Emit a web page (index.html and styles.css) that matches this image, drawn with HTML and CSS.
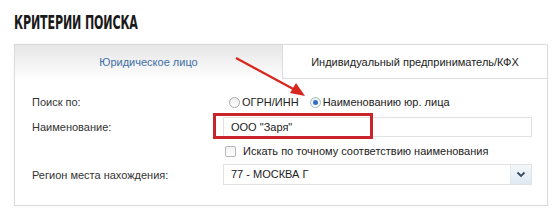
FILE: index.html
```html
<!DOCTYPE html>
<html lang="ru">
<head>
<meta charset="utf-8">
<link rel="stylesheet" href="styles.css">
</head>
<body>
<div class="page">
  <h1 class="title">КРИТЕРИИ ПОИСКА</h1>
  <div class="panel">
    <div class="tabs">
      <div class="tab tab-active">Юридическое лицо</div>
      <div class="tab tab-other">Индивидуальный предприниматель/КФХ</div>
    </div>
    <div class="body">
      <div class="row row1">
        <div class="label">Поиск по:</div>
        <div class="control radios">
          <span class="radio"></span><span class="rtext">ОГРН/ИНН</span>
          <span class="radio radio-on"></span><span class="rtext">Наименованию юр. лица</span>
        </div>
      </div>
      <div class="row row2">
        <div class="label">Наименование:</div>
        <div class="control input">ООО "Заря"</div>
      </div>
      <div class="row row3">
        <div class="label"></div>
        <div class="control check"><span class="box"></span><span>Искать по точному соответствию наименования</span></div>
      </div>
      <div class="row row4">
        <div class="label">Регион места нахождения:</div>
        <div class="control select"><span class="sel-text">77 - МОСКВА Г</span><span class="sel-btn"><svg width="10" height="7" viewBox="0 0 10 7"><path d="M1.5 1.5 L5 5 L8.5 1.5" fill="none" stroke="#3b4a5c" stroke-width="1.8"/></svg></span></div>
      </div>
    </div>
  </div>
  <div class="redbox"></div>
  <svg class="arrow" width="560" height="221" viewBox="0 0 560 221">
    <line x1="236" y1="58" x2="297" y2="91" stroke="#d8261f" stroke-width="2.2"/>
    <polygon points="305,96 290,93 296,83" fill="#d8261f"/>
  </svg>
</div>
</body>
</html>
```
FILE: styles.css
```css
html, body { margin: 0; padding: 0; background: #fff; }
.page {
  position: relative;
  width: 560px;
  height: 221px;
  font-family: "Liberation Sans", Arial, sans-serif;
  font-size: 11px;
  color: #333;
  padding-top: 12px;
  box-sizing: border-box;
}
.title {
  margin: 0 0 0 14px;
  height: 32px;
  font-family: "Liberation Sans Narrow", "DejaVu Sans Condensed", sans-serif;
  font-weight: bold;
  font-size: 20px;
  line-height: 20px;
  color: #1a1a1a;
  letter-spacing: -0.2px;
  white-space: nowrap;
  transform: scaleX(0.615);
  transform-origin: left center;
}
.panel {
  margin-left: 14px;
  width: 534px;
  height: 162px;
  box-sizing: border-box;
  border: 1px solid #dcdcdc;
  border-top: none;
  box-shadow: 0 0 2px rgba(0,0,0,0.06);
}
.tabs { display: flex; height: 35px; }
.tab {
  display: flex; align-items: center; justify-content: center;
  box-sizing: border-box;
  font-size: 11px;
}
.tab-active {
  width: 267px;
  color: #3d6fa6;
  background: linear-gradient(#e6e6e6, #fafafa 85%, #fff);
  border-top: 1px solid #d6d6d6;
}
.tab-other {
  flex: 1;
  color: #222;
  background: #fff;
  border: 1px solid #dcdcdc;
  border-right: none;
  border-radius: 0 3px 0 0;
}
.body { padding: 13px 0 0 17px; }
.row { display: flex; align-items: center; }
.row1 { height: 20px; }
.row2 { height: 20px; margin-top: 5px; }
.row3 { height: 20px; margin-top: 4px; }
.row4 { height: 21px; margin-top: 3px; }
.label { width: 191px; flex: none; color: #333; }
.control { flex: none; }
.radios { display: flex; align-items: center; padding-left: 6px; }
.radio {
  width: 9px; height: 9px; border-radius: 50%;
  border: 1px solid #aaa; background: linear-gradient(#eee, #fff);
  margin-right: 2px; position: relative;
}
.radio-on { margin-left: 11px; border-color: #9bb; }
.radio-on::after {
  content: ""; position: absolute; left: 2px; top: 2px; width: 5px; height: 5px;
  border-radius: 50%; background: #2d6ecf;
}
.rtext { color: #222; }
.input {
  width: 309px; height: 20px; box-sizing: border-box;
  border: 1px solid #e2e2e2; padding-left: 7px; line-height: 18px; color: #222;
}
.check { display: flex; align-items: center; padding-left: 2px; color: #222; }
.box {
  width: 9px; height: 9px; border: 1px solid #b5b5b5; border-radius: 2px;
  background: linear-gradient(#f2f2f2, #fff); margin-right: 7px;
}
.select {
  width: 309px; height: 21px; box-sizing: border-box;
  border: 1px solid #e2e2e2; display: flex; align-items: stretch; color: #222;
}
.sel-text { flex: 1; padding-left: 7px; line-height: 19px; }
.sel-btn {
  width: 20px; display: flex; align-items: center; justify-content: center;
  background: linear-gradient(#f3f7fb, #dfe9f3); border-left: 1px solid #e6eaef;
}
.redbox {
  position: absolute; left: 213px; top: 113px; width: 160px; height: 26px;
  box-sizing: border-box; border: 3px solid #c9232b;
}
.arrow { position: absolute; left: 0; top: 0; pointer-events: none; }
```
